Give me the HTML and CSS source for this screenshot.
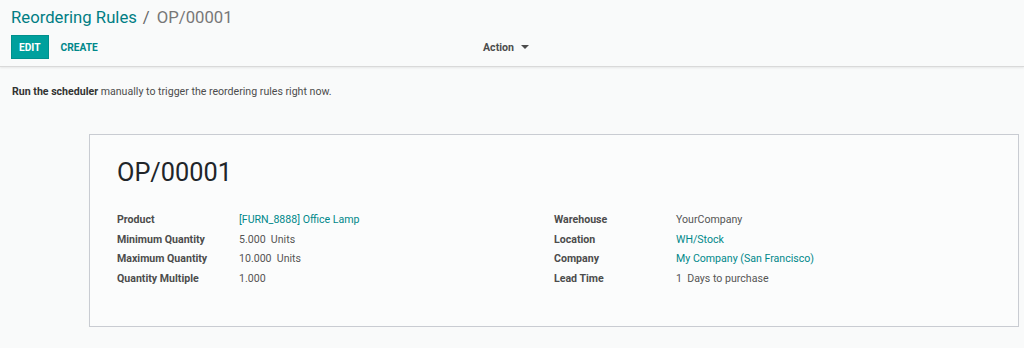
FILE: index.html
```html
<!DOCTYPE html>
<html lang="en">
<head>
    <meta charset="UTF-8">
    <title>OP/00001 - Reordering Rules</title>
    <link rel="stylesheet" href="styles.css">
</head>
<body>
    <div class="control-panel">
        <ol class="breadcrumb">
            <li><a href="#">Reordering Rules</a></li>
            <li class="active">OP/00001</li>
        </ol>
        <div class="cp-bottom">
            <div class="buttons">
                <button class="btn btn-primary">EDIT</button>
                <button class="btn btn-link">CREATE</button>
            </div>
            <div class="sidebar">
                <span class="dropdown">Action <span class="caret"></span></span>
            </div>
        </div>
    </div>

    <div class="form-view">
        <p class="alert"><b>Run the scheduler</b> manually to trigger the reordering rules right now.</p>

        <div class="sheet">
            <h1 class="title">OP/00001</h1>
            <div class="groups">
                <table class="group">
                    <tr><td class="label">Product</td><td><a href="#">[FURN_8888] Office Lamp</a></td></tr>
                    <tr><td class="label">Minimum Quantity</td><td>5.000 &nbsp;Units</td></tr>
                    <tr><td class="label">Maximum Quantity</td><td>10.000 &nbsp;Units</td></tr>
                    <tr><td class="label">Quantity Multiple</td><td>1.000</td></tr>
                </table>
                <table class="group">
                    <tr><td class="label">Warehouse</td><td>YourCompany</td></tr>
                    <tr><td class="label">Location</td><td><a href="#">WH/Stock</a></td></tr>
                    <tr><td class="label">Company</td><td><a href="#">My Company (San Francisco)</a></td></tr>
                    <tr><td class="label">Lead Time</td><td>1 &nbsp;Days to purchase</td></tr>
                </table>
            </div>
        </div>
    </div>
</body>
</html>
```

FILE: styles.css
```css
body {
    margin: 0;
    font-family: Roboto, "Noto Sans", sans-serif;
    font-size: 10.6px;
    color: #4c4c4c;
    background-color: #f9fafa;
}
a {
    color: #00888a;
    text-decoration: none;
}
.control-panel {
    padding: 5px 11px 7px 11px;
    border-bottom: 1px solid #d9d9d9;
    box-shadow: 0 1px 2px rgba(0, 0, 0, 0.08);
}
.breadcrumb {
    list-style: none;
    margin: 0;
    padding: 0;
    display: flex;
    font-size: 16.7px;
    line-height: 26px;
}
.breadcrumb a {
    color: #017e84;
}
.breadcrumb .active {
    color: #777;
}
.breadcrumb .active::before {
    content: "/";
    padding: 0 7px 0 6px;
    color: #666;
}
.cp-bottom {
    display: grid;
    grid-template-columns: 1fr 1fr;
    margin-top: 4px;
}
.buttons {
    display: flex;
}
.btn {
    font-family: inherit;
    font-size: 10.2px;
    font-weight: bold;
    border: 1px solid transparent;
    height: 24px;
    padding: 0 6px;
    cursor: pointer;
}
.btn-primary {
    background-color: #00a09d;
    color: #fff;
    border-color: #00908d;
    padding: 0 7px;
}
.btn-link {
    background: none;
    color: #00888a;
    margin-left: 5px;
}
.sidebar {
    display: flex;
    align-items: center;
    margin-left: -29px;
}
.dropdown {
    font-size: 10.6px;
    font-weight: bold;
    color: #4c4c4c;
}
.caret {
    display: inline-block;
    width: 0;
    height: 0;
    margin-left: 4px;
    vertical-align: 2px;
    border-top: 4px solid #4c4c4c;
    border-left: 4px solid transparent;
    border-right: 4px solid transparent;
}
.form-view {
    padding: 0 5px 0 12px;
}
.alert {
    margin: 18px 0 0 0;
    line-height: 14px;
}
.alert b {
    color: #333;
}
.sheet {
    box-sizing: border-box;
    height: 193px;
    margin: 35px 0 0 77px;
    background-color: #fbfcfc;
    border: 1px solid #c9ccd2;
    box-shadow: 0 3px 0 rgba(0, 0, 0, 0.09), 0 7px 3px -2px rgba(0, 0, 0, 0.08);
    padding: 23px 27px 0 27px;
}
.title {
    margin: 0;
    font-size: 25.3px;
    font-weight: 400;
    color: #212529;
    line-height: 30px;
}
.groups {
    display: grid;
    grid-template-columns: 1fr 1fr;
    margin-top: 22px;
}
.group {
    border-collapse: collapse;
}
.group td {
    padding: 0;
    height: 19.5px;
    color: #555;
}
.group td.label {
    width: 122px;
    font-weight: bold;
    color: #4c4c4c;
}
```
